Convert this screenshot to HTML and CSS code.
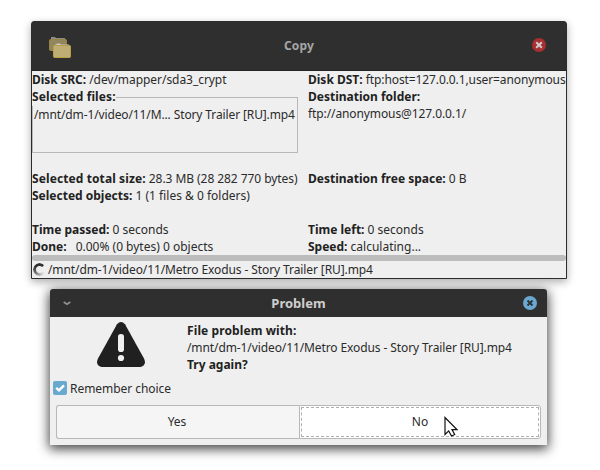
FILE: index.html
```html
<!DOCTYPE html>
<html lang="en">
<head>
<meta charset="utf-8">
<title>Copy</title>
<link rel="stylesheet" href="styles.css">
</head>
<body>
<section class="window copy-window">
  <header class="titlebar copy-title">
    <svg class="folders" width="24" height="24" viewBox="0 0 24 24">
      <path d="M3 4V2h4l1 1h9v3H3z" fill="#8b8b8b"/>
      <rect x="1.500" y="4.500" width="17" height="11" rx="1" fill="#93865c" stroke="#9a843e"/>
      <path d="M7 11V9.500h1l1-1h3l1 1h8V11z" fill="#c5c5c5"/>
      <rect x="5.500" y="10.500" width="17" height="12" rx="1" fill="#bfae74" stroke="#bd9f43"/>
    </svg>
    <h1>Copy</h1>
    <svg class="close" width="14" height="14" viewBox="0 0 14 14">
      <circle cx="7" cy="7" r="7" fill="#a82f31"/>
      <path d="M4.200 4.200l5.600 5.600M9.800 4.200l-5.600 5.600" stroke="#d0cccc" stroke-width="2"/>
    </svg>
  </header>
  <div class="details">
    <div class="column">
      <p class="source"><b>Disk SRC:</b> /dev/mapper/sda3_crypt</p>
      <fieldset>
        <legend>Selected files:</legend>
        <p class="path file">/mnt/dm-1/video/11/M... Story Trailer [RU].mp4</p>
      </fieldset>
      <p><b class="wide">Selected total size:</b> <span class="size">28.3 MB (28 282 770 bytes)</span></p>
      <p><b>Selected objects:</b> 1 (1 files &amp; 0 folders)</p>
      <p class="times"><b>Time passed:</b> 0 seconds</p>
      <p class="done"><b>Done:</b><span>0.00% (0 bytes) 0 objects</span></p>
    </div>
    <div class="column">
      <p><b>Disk DST:</b> <span class="path">ftp:host=127.0.0.1,user=anonymous</span></p>
      <p><b>Destination folder:</b></p>
      <p class="path">ftp://anonymous@127.0.0.1/</p>
      <p class="free"><b>Destination free space:</b> 0 B</p>
      <p class="left"><b>Time left:</b> 0 seconds</p>
      <p><b>Speed:</b> calculating...</p>
    </div>
  </div>
  <div class="progress"></div>
  <div class="status path"><i class="spinner"></i>/mnt/dm-1/video/11/Metro Exodus - Story Trailer [RU].mp4</div>
</section>

<section class="window dialog">
  <header class="titlebar dialog-title">
    <svg class="chevron" width="8" height="5" viewBox="0 0 8 5"><path d="M.7 1l3.300 2.300L7.300 1" fill="none" stroke="#929292" stroke-width="1.700"/></svg>
    <h1>Problem</h1>
    <svg class="close" width="14" height="14" viewBox="0 0 14 14">
      <circle cx="7" cy="7" r="7" fill="#6aa8cf"/>
      <path d="M4.500 4.500l5 5M9.500 4.500l-5 5" stroke="#2d3338" stroke-width="1.800"/>
    </svg>
  </header>
  <div class="message">
    <svg class="warning" width="48" height="45" viewBox="0 0 48 45">
      <path d="M20 2.200Q24-2.200 28 2.200L47 36.500Q50 43 43.500 45H4.500Q-2 43 1 36.500z" fill="#202020"/>
      <rect x="21" y="12" width="6" height="18" rx="2.800" fill="#efefef"/>
      <circle cx="24" cy="36" r="3.100" fill="#efefef"/>
    </svg>
    <div>
      <p><b class="wide">File problem with:</b></p>
      <p class="path">/mnt/dm-1/video/11/Metro Exodus - Story Trailer [RU].mp4</p>
      <p><b>Try again?</b></p>
    </div>
  </div>
  <div class="remember">
    <svg width="14" height="14" viewBox="0 0 14 14"><rect width="14" height="14" rx="2" fill="#6aa9ce"/><path d="M3.200 6.800l2.800 2.600 5-5" fill="none" stroke="#fff" stroke-width="2.400"/></svg>
    Remember choice
  </div>
  <div class="buttons">
    <div class="button yes">Yes</div>
    <div class="button no"><span>No</span></div>
  </div>
</section>

<svg class="cursor" width="14" height="21" viewBox="0 0 14 21">
  <path d="M1 1.500v17l3.700-3.600 2.800 5.100 3.200-1.500-2.700-4.900h4.900z" fill="#fff" stroke="#111" stroke-width="1.200"/>
</svg>
</body>
</html>
```

FILE: styles.css
```css
* { box-sizing: border-box; }
body {
  margin: 0;
  width: 600px;
  height: 470px;
  position: relative;
  overflow: hidden;
  background: #fff;
  color: #2b2b2b;
  font: 12px/17px "Noto Sans", sans-serif;
  white-space: nowrap;
}
p, h1 { margin: 0; }
b, legend { color: #222; font-weight: 700; }
.path { letter-spacing: -.1px; }
.file { letter-spacing: -.12px; }
.source, .remember { letter-spacing: -.05px; }
.wide { letter-spacing: .1px; }
.size { letter-spacing: -.06px; }
.window { position: absolute; background: #efefef; }
.copy-window {
  left: 31px;
  top: 21px;
  width: 536px;
  height: 258px;
  border: 1px solid #2d2d2d;
  border-radius: 3px 3px 0 0;
  box-shadow: 0 3px 9px rgba(0, 0, 0, .32);
}
.titlebar {
  display: flex;
  align-items: center;
  background: #2f2f2f;
}
.titlebar h1 { flex: 1; text-align: center; font-weight: 700; }
.copy-title { height: 49px; padding: 0 20px 2px 16px; border-bottom: 1px solid #262626; }
.folders { margin-top: 4px; }
.copy-title h1 { font-size: 12px; color: #a6a6a6; padding-right: 6px; letter-spacing: .2px; }
.details { display: grid; grid-template-columns: 276px 1fr; height: 184px; }
.column { min-width: 0; }
fieldset {
  margin: 0 0 17px;
  padding: 0 0 0 1px;
  width: 266px;
  min-width: 0;
  height: 65px;
  border: 1px solid #b8b8b8;
}
legend { padding: 0; margin-left: -2px; height: 18px; letter-spacing: .1px; }
.times, .left { margin-top: 17px; }
.done span { margin-left: 9px; }
.free { margin-top: 48px; }
.left { margin-top: 34px; }
.progress { height: 6px; border-radius: 3px; background: #bcbcbc; }
.status { display: flex; align-items: center; height: 17px; }
.spinner {
  width: 13px;
  height: 13px;
  margin: 0 2px 0 1px;
  border-radius: 50%;
  background: conic-gradient(#303030 0 11%, transparent 15% 33%, #dedede 38%, #a8a8a8 52%, #555 72%, #303030 88%);
  -webkit-mask: radial-gradient(circle, transparent 3px, #000 4px);
  mask: radial-gradient(circle, transparent 3px, #000 4px);
}
.dialog {
  left: 50px;
  top: 289px;
  width: 497px;
  height: 156px;
  border-radius: 3px 3px 0 0;
  box-shadow: 0 3px 12px 1px rgba(0, 0, 0, .75);
}
.dialog-title { height: 28px; padding: 0 10px 0 13px; border-radius: 3px 3px 0 0; }
.dialog-title h1 { font-size: 13px; color: #cfcfcf; padding: 1px 0 0 3px; }
.message { display: flex; height: 61px; padding: 5px 0 0 47px; }
.message > div { margin-left: 42px; }
.remember { display: flex; align-items: center; gap: 3px; height: 20px; padding-left: 3px; }
.buttons { display: grid; grid-template-columns: 243px 1fr; height: 34px; margin: 7px 6px 0; }
.button { display: grid; place-items: center; border: 1px solid #b8b8b8; }
.yes { border-radius: 3px 0 0 3px; border-right: 0; background: #f5f5f5; padding: 0 2px 2px 0; }
.no { border-radius: 0 3px 3px 0; background: #fff; padding: 1px; }
.no span { display: grid; place-items: center; width: 100%; height: 100%; border: 1px dashed #b0b0b0; padding-bottom: 2px; }
.cursor { position: absolute; left: 444px; top: 416px; }
```
